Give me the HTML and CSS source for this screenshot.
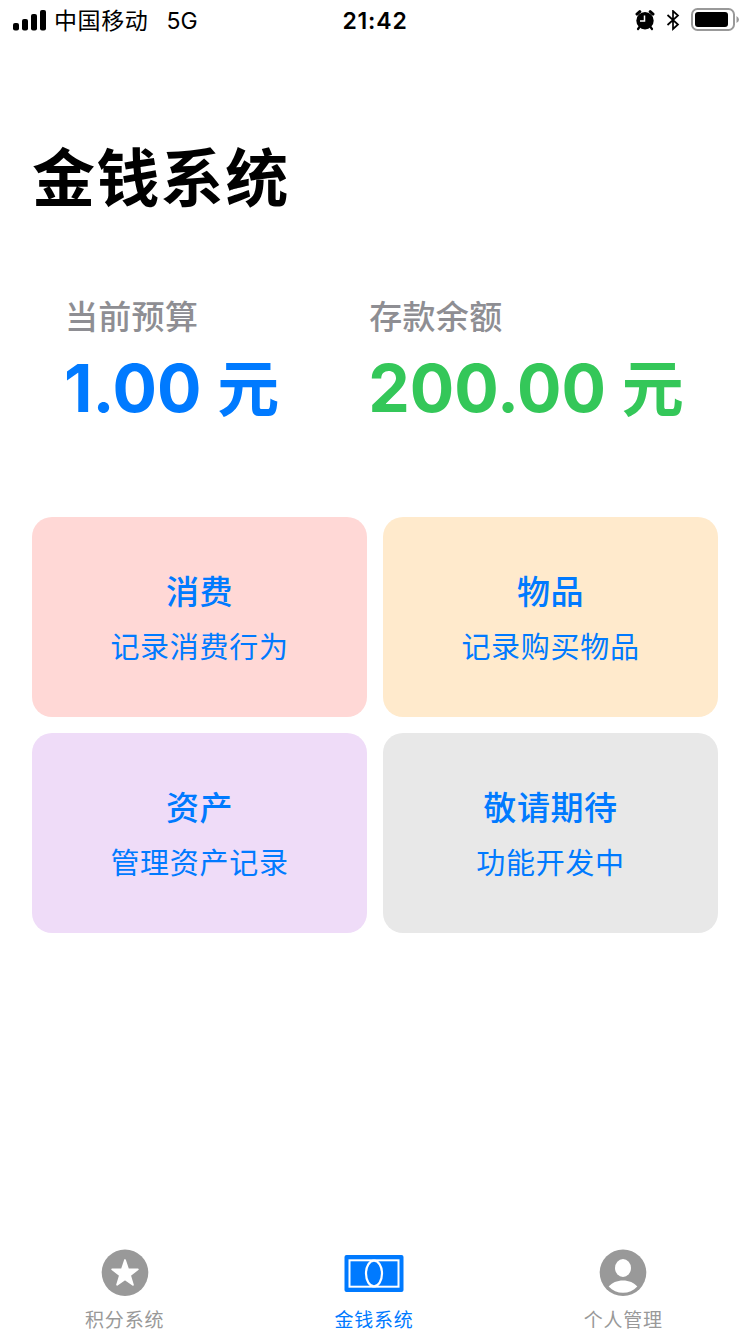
FILE: index.html
```html
<!DOCTYPE html>
<html lang="zh-CN">
<head>
    <meta charset="UTF-8">
    <title>金钱系统</title>
    <link rel="stylesheet" href="styles.css">
</head>
<body>
    <header class="status-bar">
        <div class="status-left">
            <svg class="signal" width="34" height="22" viewBox="0 0 34 22">
                <rect x="0" y="13" width="6" height="7.5" rx="2"/>
                <rect x="9" y="9" width="6" height="11.5" rx="2"/>
                <rect x="18" y="4" width="6" height="16.5" rx="2"/>
                <rect x="27" y="0" width="6" height="20.5" rx="2"/>
            </svg>
            <span class="carrier">中国移动</span>
            <span class="network">5G</span>
        </div>
        <div class="status-time">21:42</div>
        <div class="status-right">
            <svg class="alarm" width="20" height="22" viewBox="0 0 20 22">
                <circle cx="10" cy="10.7" r="8.7"/>
                <path d="M2 4.1 L4.8 1.7M18 4.1 L15.2 1.7" fill="none" stroke="#000" stroke-width="3" stroke-linecap="round"/>
                <path d="M4.5 17 L3 19M15.5 17 L17 19" stroke="#000" stroke-width="2.2" stroke-linecap="round"/>
                <path d="M9.5 5.5 V11 H5" fill="none" stroke="#fff" stroke-width="1.5"/>
            </svg>
            <svg class="bluetooth" width="14" height="22" viewBox="0 0 14 22">
                <path d="M1.5 5 L12 14.5 L7 19 V1 L12 5.5 L1.5 15" fill="none" stroke="#000" stroke-width="1.7"/>
            </svg>
            <svg class="battery" width="48" height="26" viewBox="0 0 48 26">
                <rect x="1" y="1" width="42" height="21" rx="5.5" fill="none" stroke="#999" stroke-width="2"/>
                <rect x="4" y="4" width="33" height="15" rx="3"/>
                <path d="M45.5 8 Q48 9.5 48 11.5 Q48 13.5 45.5 15 Z" fill="#999"/>
            </svg>
        </div>
    </header>

    <main class="content">
        <h1 class="page-title">金钱系统</h1>

        <section class="summary">
            <div class="summary-item">
                <div class="summary-label">当前预算</div>
                <div class="summary-value budget">1.00 <span class="unit">元</span></div>
            </div>
            <div class="summary-item">
                <div class="summary-label">存款余额</div>
                <div class="summary-value balance">200.00 <span class="unit">元</span></div>
            </div>
        </section>

        <section class="card-grid">
            <a class="card card-red">
                <div class="card-title">消费</div>
                <div class="card-desc">记录消费行为</div>
            </a>
            <a class="card card-orange">
                <div class="card-title">物品</div>
                <div class="card-desc">记录购买物品</div>
            </a>
            <a class="card card-purple">
                <div class="card-title">资产</div>
                <div class="card-desc">管理资产记录</div>
            </a>
            <a class="card card-gray">
                <div class="card-title">敬请期待</div>
                <div class="card-desc">功能开发中</div>
            </a>
        </section>
    </main>

    <nav class="tab-bar">
        <a class="tab">
            <svg width="60" height="48" viewBox="0 0 60 48">
                <circle cx="30" cy="23.7" r="23.3" fill="#999"/>
                <path d="M30 11 L33.1 20.2 L42.8 20.4 L35.1 26.4 L37.9 35.8 L30 30.2 L22.1 35.8 L24.9 26.4 L17.2 20.4 L26.9 20.2 Z" fill="#fff" stroke="#fff" stroke-width="1.8" stroke-linejoin="round"/>
            </svg>
            <span>积分系统</span>
        </a>
        <a class="tab active">
            <svg width="60" height="48" viewBox="0 0 60 48">
                <rect x="0.5" y="6" width="59" height="37" rx="2" fill="#007aff"/>
                <rect x="5.5" y="11.3" width="49" height="26.4" fill="none" stroke="#fff" stroke-width="2"/>
                <ellipse cx="30" cy="24.5" rx="8" ry="12.8" fill="#007aff" stroke="#fff" stroke-width="2.2"/>
            </svg>
            <span>金钱系统</span>
        </a>
        <a class="tab">
            <svg width="60" height="48" viewBox="0 0 60 48">
                <circle cx="30" cy="23.7" r="23.3" fill="#999"/>
                <ellipse cx="30" cy="19" rx="8" ry="9" fill="#fff"/>
                <path d="M15.7 37.5 C19 33.5 24 31.4 30 31.4 C36 31.4 41 33.5 44.3 37.5 C40.5 41.5 35.5 43.8 30 43.8 C24.5 43.8 19.5 41.5 15.7 37.5 Z" fill="#fff"/>
            </svg>
            <span>个人管理</span>
        </a>
    </nav>
</body>
</html>
```
FILE: styles.css
```css
* {
    box-sizing: border-box;
}
body {
    margin: 0;
    height: 1334px;
    display: flex;
    flex-direction: column;
    font-family: Inter, "Noto Sans CJK SC", sans-serif;
    background: #fff;
    color: #000;
    overflow: hidden;
}

/* 状态栏 */
.status-bar {
    height: 40px;
    padding: 0 11px 0 13px;
    display: grid;
    grid-template-columns: 1fr auto 1fr;
    align-items: center;
    font-size: 23px;
    line-height: 42px;
}
.status-left,
.status-right {
    display: flex;
    align-items: center;
}
.status-right {
    justify-content: flex-end;
}
.carrier {
    margin-left: 7px;
    letter-spacing: 0.6px;
}
.network {
    margin-left: 18px;
}
.status-time {
    font-weight: 600;
    letter-spacing: 0.8px;
    padding-right: 2px;
}
.bluetooth {
    margin-left: 11px;
}
.battery {
    margin-left: 11px;
}

/* 主体内容 */
.content {
    flex: 1;
    padding: 98px 32px 0;
}
.page-title {
    margin: 0;
    font-size: 63px;
    line-height: 80px;
    font-weight: 700;
    letter-spacing: 1.4px;
}
.summary {
    display: flex;
    gap: 90px;
    padding: 78px 0 0 33px;
}
.summary-label {
    font-size: 33px;
    line-height: 42px;
    font-weight: 500;
    letter-spacing: 0.3px;
    color: #8e8e93;
}
.summary-value {
    font-size: 66px;
    line-height: 80px;
    font-weight: 700;
    margin-top: 10px;
    margin-left: -1px;
    white-space: nowrap;
}
.unit {
    font-size: 62px;
}
.budget {
    color: #007aff;
}
.balance {
    color: #34c759;
}

/* 功能卡片 */
.card-grid {
    display: grid;
    grid-template-columns: 335px 335px;
    grid-auto-rows: 200px;
    gap: 16px;
    margin-top: 87px;
}
.card {
    border-radius: 20px;
    padding-top: 6px;
    display: flex;
    flex-direction: column;
    align-items: center;
    justify-content: center;
    color: #007aff;
}
.card-title {
    font-size: 33px;
    line-height: 40px;
    font-weight: 500;
    letter-spacing: 0.6px;
}
.card-desc {
    margin-top: 16px;
    font-size: 29px;
    line-height: 40px;
    letter-spacing: 0.7px;
}
.card-red {
    background: #ffd8d6;
}
.card-orange {
    background: #ffeacc;
}
.card-purple {
    background: #efdcf8;
}
.card-gray {
    background: #e8e8e8;
}

/* 底部标签栏 */
.tab-bar {
    height: 85px;
    display: grid;
    grid-template-columns: repeat(3, 1fr);
    padding-right: 2px;
}
.tab {
    display: flex;
    flex-direction: column;
    align-items: center;
    color: #999;
    font-size: 19px;
    line-height: 28px;
    letter-spacing: 0.8px;
}
.tab span {
    margin-top: 10px;
}
.tab.active {
    color: #007aff;
}
```
